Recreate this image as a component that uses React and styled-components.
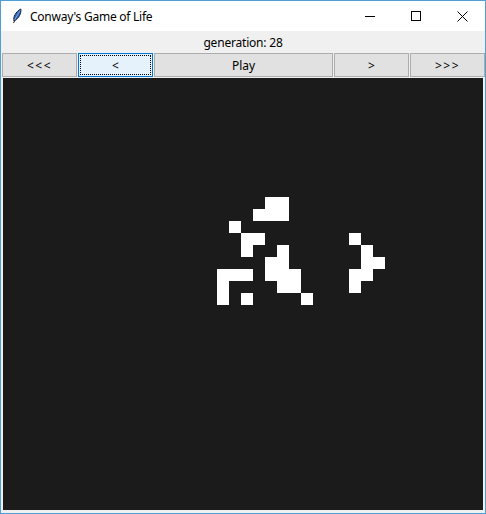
import React from "react";
import styled, { createGlobalStyle } from "styled-components";

const Global = createGlobalStyle`
  html, body { margin: 0; padding: 0; width: 486px; height: 514px; overflow: hidden; background: #f0f0f0; }
  * { box-sizing: border-box; }
`;

const Window = styled.div`
  width: 486px;
  height: 514px;
  border: 1px solid #4f9fd4;
  background: #f0f0f0;
  display: flex;
  flex-direction: column;
  font-family: "Noto Sans", "Open Sans", sans-serif;
  font-size: 12px;
  color: #000;
`;

const TitleBar = styled.div`
  height: 30px;
  background: #fff;
  display: flex;
  align-items: center;
  flex-shrink: 0;
`;

const AppIcon = styled.svg`
  width: 16px;
  height: 16px;
  margin-left: 8px;
  margin-right: 5px;
`;

const Title = styled.span`
  flex: 1;
  font-size: 12px;
  letter-spacing: -0.25px;
  white-space: nowrap;
`;

const Ctrl = styled.div`
  width: 46px;
  height: 29px;
  display: flex;
  align-items: center;
  justify-content: center;
`;

const Label = styled.div`
  height: 22px;
  display: flex;
  align-items: center;
  justify-content: center;
  font-size: 12px;
  letter-spacing: -0.2px;
  flex-shrink: 0;
`;

const ButtonRow = styled.div`
  display: grid;
  grid-template-columns: 76px 76px 180px 76px 76px;
  height: 24px;
  flex-shrink: 0;
`;

const Btn = styled.button`
  margin: 0 0 0 1px;
  height: 24px;
  padding: 0;
  font-family: "Noto Sans", "Open Sans", sans-serif;
  font-size: 12px;
  color: #000;
  background: ${(p) => (p.$focused ? "#e5f1fb" : "#e1e1e1")};
  border: 1px solid ${(p) => (p.$focused ? "#0078d7" : "#adadad")};
  outline: ${(p) => (p.$focused ? "1px dotted #000" : "none")};
  outline-offset: -3px;
  letter-spacing: ${(p) => (p.$spaced ? "1.5px" : "0")};
  display: flex;
  align-items: center;
  justify-content: center;
`;

const Board = styled.svg`
  display: block;
  margin: 1px 0 0 2px;
  width: 480px;
  height: 432px;
  background: #1b1b1b;
`;

const cells = [
  [265, 197], [277, 197],
  [253, 209], [265, 209], [277, 209],
  [229, 221],
  [241, 233], [253, 233], [349, 233],
  [241, 245], [277, 245], [361, 245],
  [265, 257], [277, 257], [361, 257], [373, 257],
  [217, 269], [229, 269], [241, 269], [265, 269], [277, 269], [289, 269], [349, 269], [361, 269],
  [217, 281], [277, 281], [289, 281], [349, 281],
  [217, 293], [241, 293], [301, 293],
];

export default function App() {
  return (
    <>
      <Global />
      <Window>
        <TitleBar>
          <AppIcon viewBox="0 0 16 16">
            <path d="M4.5 15 L11.5 1.5" stroke="#222" strokeWidth="1" fill="none" />
            <path d="M5 13 C4 9 6.5 4 11.8 1 C12.5 5 10 10.5 5 13 Z" fill="#2f66b8" stroke="#14203f" strokeWidth="1" />
            <path d="M5.6 12 L11 2.5" stroke="#8fb8ea" strokeWidth="0.8" />
          </AppIcon>
          <Title>Conway's Game of Life</Title>
          <Ctrl>
            <svg width="10" height="10" viewBox="0 0 10 10">
              <path d="M0 5.5 H10" stroke="#000" strokeWidth="1" />
            </svg>
          </Ctrl>
          <Ctrl>
            <svg width="10" height="10" viewBox="0 0 10 10">
              <rect x="0.5" y="0.5" width="9" height="9" fill="none" stroke="#000" strokeWidth="1" />
            </svg>
          </Ctrl>
          <Ctrl>
            <svg width="11" height="11" viewBox="0 0 11 11">
              <path d="M0.5 0.5 L10.5 10.5 M10.5 0.5 L0.5 10.5" stroke="#000" strokeWidth="1" />
            </svg>
          </Ctrl>
        </TitleBar>
        <Label>generation: 28</Label>
        <ButtonRow>
          <Btn $spaced>&lt;&lt;&lt;</Btn>
          <Btn $focused>&lt;</Btn>
          <Btn>Play</Btn>
          <Btn>&gt;</Btn>
          <Btn $spaced>&gt;&gt;&gt;</Btn>
        </ButtonRow>
        <Board viewBox="0 0 480 432">
          {cells.map(([x, y], i) => (
            <rect key={i} x={x - 3} y={y - 78} width="12" height="12" fill="#fff" />
          ))}
        </Board>
      </Window>
    </>
  );
}
